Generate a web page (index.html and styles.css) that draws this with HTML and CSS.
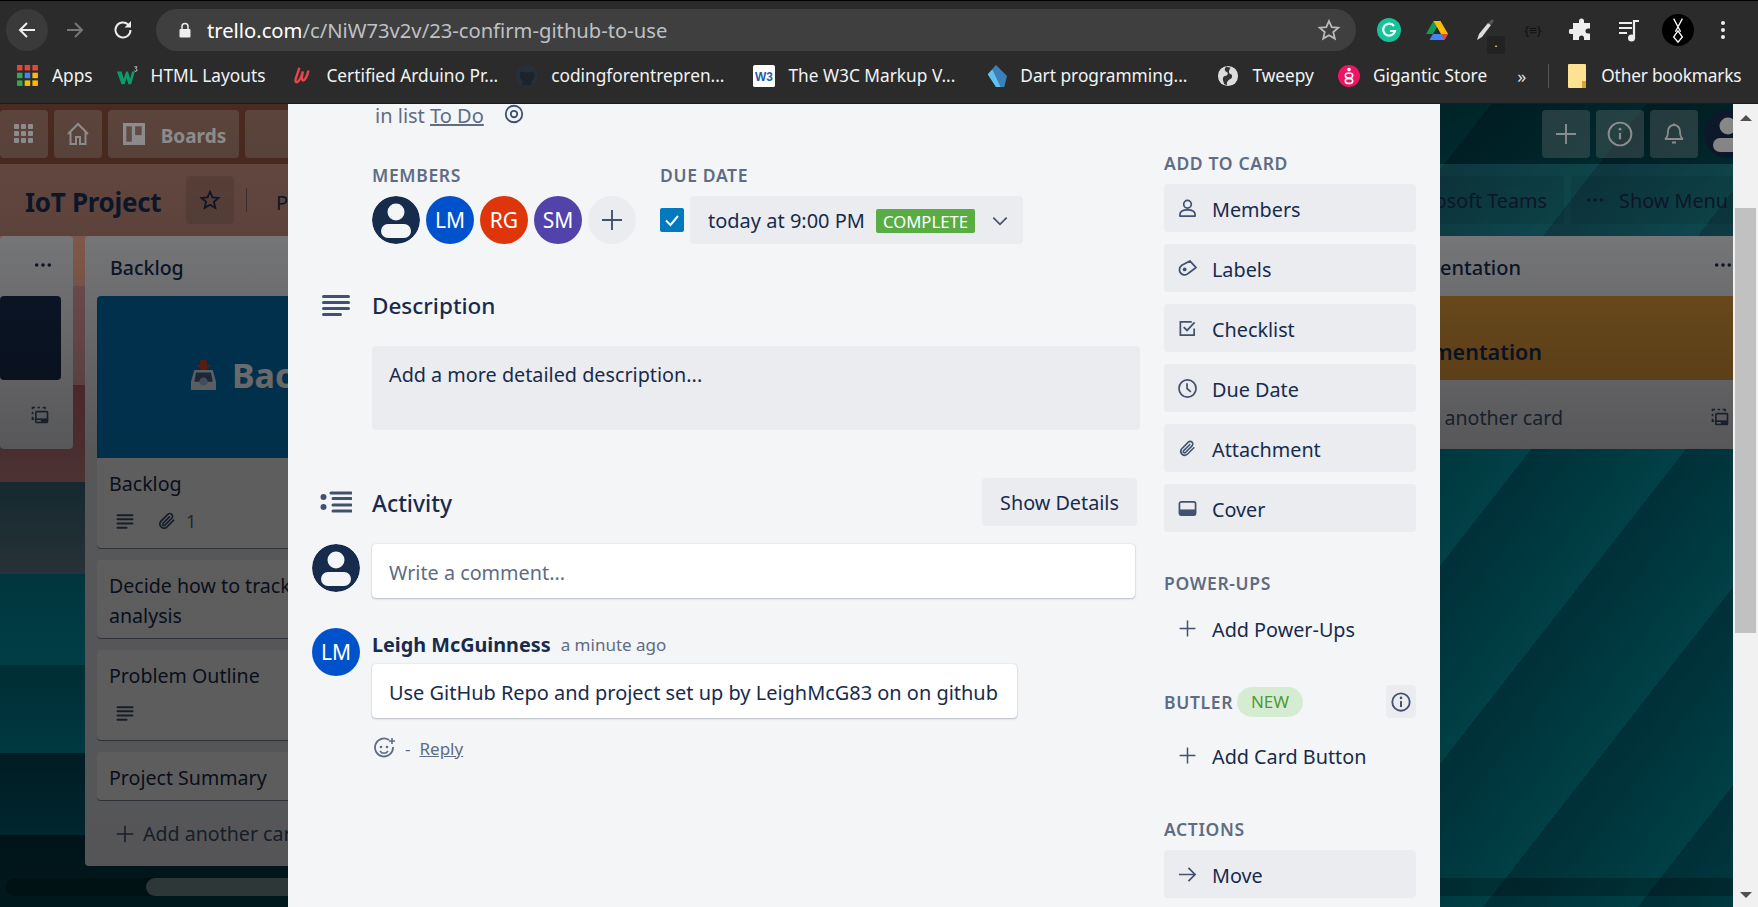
FILE: index.html
```html
<!DOCTYPE html>
<html lang="en">
<head>
<meta charset="utf-8">
<title>Confirm GitHub to use | Trello</title>
<link rel="stylesheet" href="styles.css">
</head>
<body>
<svg class="defs" width="0" height="0" aria-hidden="true">
  <symbol id="i-desc" viewBox="0 0 24 24"><path d="M3 5h18M3 10h18M3 15h18M3 20h11" fill="none" stroke="currentColor" stroke-width="2.4" stroke-linecap="round"/></symbol>
  <symbol id="i-clip" viewBox="0 0 24 24"><path d="M20 11l-8.500 8.500a5 5 0 0 1-7-7L13 4a3.300 3.300 0 0 1 4.700 4.700L9.500 17a1.600 1.600 0 0 1-2.300-2.300L15 7" fill="none" stroke="currentColor" stroke-width="2" stroke-linecap="round"/></symbol>
  <symbol id="i-plus" viewBox="0 0 24 24"><path d="M12 2v20M2 12h20" fill="none" stroke="currentColor" stroke-width="1.900"/></symbol>
  <symbol id="i-template" viewBox="0 0 24 24"><path d="M3 5V3h3M9 3h3M15 3h3v2M3 8v3M3 14v3h2" fill="none" stroke="currentColor" stroke-width="2"/><rect x="6" y="7" width="16" height="15" rx="2" fill="currentColor"/><rect x="8" y="9" width="12" height="7" fill="#ebecf0"/><rect x="8" y="18" width="5" height="2" fill="#ebecf0"/></symbol>
  <symbol id="i-avatar" viewBox="0 0 48 48"><circle cx="24" cy="24" r="24" fill="#172b4d"/><circle cx="24" cy="16" r="8.500" fill="#f4f5f7"/><rect x="9" y="28" width="30" height="14" rx="7" fill="#f4f5f7"/></symbol>
</svg>

<header class="chrome">
  <div class="toolbar">
    <span class="nav-btn nav-btn-hover"><svg viewBox="0 0 24 24" class="ic24"><path d="M20 12H5M12 5l-7 7 7 7" fill="none" stroke="#eee" stroke-width="2"/></svg></span>
    <span class="nav-btn"><svg viewBox="0 0 24 24" class="ic24"><path d="M4 12h15M12 5l7 7-7 7" fill="none" stroke="#777" stroke-width="2"/></svg></span>
    <span class="nav-btn"><svg viewBox="0 0 24 24" class="ic24"><path d="M19.500 12a7.500 7.500 0 1 1-2.300-5.400" fill="none" stroke="#eee" stroke-width="2"/><path d="M20 3v6.500h-6.500z" fill="#eee"/></svg></span>
    <div class="omnibox">
      <svg viewBox="0 0 16 16" class="lock"><rect x="2.500" y="7" width="11" height="8.500" rx="1" fill="#eee"/><path d="M5 7V4.500a3 3 0 0 1 6 0V7" fill="none" stroke="#eee" stroke-width="1.500"/></svg>
      <span class="url"><b>trello.com</b>/c/NiW73v2v/23-confirm-github-to-use</span>
      <svg viewBox="0 0 24 24" class="star"><path d="M12 3l2.700 6.100 6.600.6-5 4.400 1.500 6.500L12 17.200l-5.800 3.400 1.500-6.500-5-4.400 6.600-.6z" fill="none" stroke="#bbb" stroke-width="1.800"/></svg>
    </div>
    <div class="exts">
      <span class="ext"><svg viewBox="0 0 24 24" class="ic24"><circle cx="12" cy="12" r="12" fill="#15c39a"/><path d="M17 8a6 6 0 1 0 1 5h-5" fill="none" stroke="#fff" stroke-width="2.200"/></svg></span>
      <span class="ext"><svg viewBox="0 0 24 24" class="ic24"><path d="M8.500 3h7L8 16H1z" fill="#0f9d58"/><path d="M15.500 3L23 16h-7L8.500 3z" fill="#fbbc04"/><path d="M23 16l-3.500 6H4.500L8 16z" fill="#4285f4"/><path d="M23 16l-3.500 6-3.500-6z" fill="#ea4335"/></svg></span>
      <span class="ext"><svg viewBox="0 0 24 24" class="ic24"><path d="M4 22l2-6 9-11 3 2-9 12z" fill="#ddd"/><path d="M15 5l4-4 2 2-3 4z" fill="#555"/></svg><i class="ext-badge">.</i></span>
      <span class="ext ext-json">{≡}</span>
      <span class="ext"><svg viewBox="0 0 24 24" class="ic24"><path d="M10 3a2.500 2.500 0 0 1 5 0v2h6v5.500h-2a2.500 2.500 0 0 0 0 5h2V22h-6v-2a2.500 2.500 0 0 0-5 0v2H4v-6H2a2.500 2.500 0 0 1 0-5h2V5h6z" fill="#eee"/></svg></span>
      <span class="ext"><svg viewBox="0 0 24 24" class="ic24"><path d="M2 5h13M2 10h13M2 15h8" stroke="#eee" stroke-width="2.200" fill="none"/><path d="M17 21V3h5" stroke="#eee" stroke-width="2.200" fill="none"/><circle cx="14.500" cy="20" r="3.500" fill="#eee"/></svg></span>
      <span class="profile"><svg viewBox="0 0 32 32"><path d="M11 3l8 15M21 3l-8 15M16 17l-5 7 5 6 5-6z" fill="none" stroke="#fff" stroke-width="1.500"/></svg></span>
      <span class="ext"><svg viewBox="0 0 24 24" class="ic24"><circle cx="12" cy="5" r="2" fill="#eee"/><circle cx="12" cy="12" r="2" fill="#eee"/><circle cx="12" cy="19" r="2" fill="#eee"/></svg></span>
    </div>
  </div>
  <nav class="bookmarks">
    <span class="bm bm-apps"><svg viewBox="0 0 20 20" class="fav"><g><rect x="0" y="0" width="5" height="5" fill="#ea4335"/><rect x="7" y="0" width="5" height="5" fill="#ea4335"/><rect x="14" y="0" width="5" height="5" fill="#ea4335"/><rect x="0" y="7" width="5" height="5" fill="#34a853"/><rect x="7" y="7" width="5" height="5" fill="#4285f4"/><rect x="14" y="7" width="5" height="5" fill="#fbbc04"/><rect x="0" y="14" width="5" height="5" fill="#34a853"/><rect x="7" y="14" width="5" height="5" fill="#fbbc04"/><rect x="14" y="14" width="5" height="5" fill="#fbbc04"/></g></svg>Apps</span>
    <span class="bm bm-html"><svg viewBox="0 0 24 24" class="fav"><path d="M1 7h5l2.500 8 2.500-8h2l2.500 8 2-8h3l-4 14h-3l-2-7-2 7H6z" fill="#0a9d6a"/><path d="M20 2h3l-1.500 2a1.500 1.500 0 1 1-1.500 2" fill="none" stroke="#ccc" stroke-width="1"/></svg>HTML Layouts</span>
    <span class="bm bm-cert"><svg viewBox="0 0 24 24" class="fav"><path d="M9 3c-1 6-5 12-4 15 1 2 4 0 6-5l2-6c-1 5-2 9 0 10 2 0 5-5 6-11" fill="none" stroke="#e5474b" stroke-width="2.600"/></svg>Certified Arduino Pr...</span>
    <span class="bm bm-code"><svg viewBox="0 0 24 24" class="fav"><circle cx="12" cy="12" r="12" fill="#26303a"/><path d="M7 22v-5c-2-1-3-3-3-6l1-4 3 1h8l3-1 1 4c0 3-1 5-3 6v5z" fill="#1c232b"/></svg>codingforentrepren...</span>
    <span class="bm bm-w3"><svg viewBox="0 0 24 24" class="fav"><rect width="24" height="24" rx="2" fill="#fff"/><text x="12" y="17" text-anchor="middle" class="w3">W3</text></svg>The W3C Markup V...</span>
    <span class="bm bm-dart"><svg viewBox="0 0 24 24" class="fav"><path d="M12 0L3 10l9 14h9l3-12z" fill="#3d7fb8"/><path d="M3 10l5-5 9 19h-5z" fill="#5fc3ee"/></svg>Dart programming...</span>
    <span class="bm bm-tweepy"><svg viewBox="0 0 24 24" class="fav"><circle cx="12" cy="12" r="11" fill="#ddd"/><path d="M10 2c-3 3-1 5 1 6s0 4-2 4-4 2-1 9l3 1c-1-4 2-6 4-7s2-5 0-5-3-4 0-7z" fill="#333"/></svg>Tweepy</span>
    <span class="bm bm-giant"><svg viewBox="0 0 24 24" class="fav"><circle cx="12" cy="12" r="12" fill="#ee1465"/><rect x="8" y="9" width="8" height="5" rx="2.500" fill="none" stroke="#fff" stroke-width="1.800"/><rect x="8" y="15" width="8" height="5" rx="2.500" fill="none" stroke="#fff" stroke-width="1.800"/><circle cx="12" cy="5" r="2" fill="#fff"/></svg>Gigantic Store</span>
    <span class="bm-more">»</span>
    <span class="bm-sep"></span>
    <span class="bm bm-other"><svg viewBox="0 0 18 24" class="fav-folder"><rect width="18" height="24" rx="1" fill="#fde293"/><path d="M14 24v-7h4v7z" fill="#d3a82b"/></svg>Other bookmarks</span>
  </nav>
</header>

<main class="viewport">
  <div class="board">
    <div class="board-nav">
      <div class="nav-group">
        <span class="bbtn bbtn-square bbtn-apps"><svg viewBox="0 0 20 20" class="ic20"><g fill="#fff"><rect x="0" y="0" width="5" height="5" rx="1"/><rect x="7" y="0" width="5" height="5" rx="1"/><rect x="14" y="0" width="5" height="5" rx="1"/><rect x="0" y="7" width="5" height="5" rx="1"/><rect x="7" y="7" width="5" height="5" rx="1"/><rect x="14" y="7" width="5" height="5" rx="1"/><rect x="0" y="14" width="5" height="5" rx="1"/><rect x="7" y="14" width="5" height="5" rx="1"/><rect x="14" y="14" width="5" height="5" rx="1"/></g></svg></span>
        <span class="bbtn bbtn-square"><svg viewBox="0 0 24 24" class="ic24"><path d="M2 12L12 2l10 10M4.500 10v12H10v-7h4v7h5.500V10" fill="none" stroke="#fff" stroke-width="2"/></svg></span>
        <span class="bbtn bbtn-boards"><svg viewBox="2 2 20 20" class="ic22"><path d="M2 2h20v20H2z" fill="#fff"/><rect x="5" y="5" width="5" height="14" fill="#b08a80"/><rect x="13" y="5" width="6" height="8" fill="#b08a80"/></svg><span>Boards</span></span>
        <span class="bbtn bbtn-search"></span>
      </div>
      <div class="nav-group">
        <span class="bbtn bbtn-square"><svg viewBox="0 0 24 24" class="ic24"><use href="#i-plus" color="#fff"/></svg></span>
        <span class="bbtn bbtn-square"><svg viewBox="0 0 24 24" class="ic26"><circle cx="12" cy="12" r="10.500" fill="none" stroke="#fff" stroke-width="1.800"/><path d="M12 11v6" stroke="#fff" stroke-width="2"/><circle cx="12" cy="7.500" r="1.300" fill="#fff"/></svg></span>
        <span class="bbtn bbtn-square"><svg viewBox="0 0 24 24" class="ic24"><path d="M12 3a6 6 0 0 1 6 6c0 5 1 7 3 8H3c2-1 3-3 3-8a6 6 0 0 1 6-6zM10 20.500h4M11 2.500h2" fill="none" stroke="#fff" stroke-width="1.800"/></svg></span>
        <svg viewBox="0 0 48 48" class="nav-avatar"><use href="#i-avatar"/></svg>
      </div>
    </div>
    <div class="board-bar">
      <div class="bar-left">
        <h1 class="board-name">IoT Project</h1>
        <span class="bar-star"><svg viewBox="0 0 24 24" class="ic22"><path d="M12 3l2.700 6.100 6.600.6-5 4.400 1.500 6.500L12 17.200l-5.800 3.400 1.500-6.500-5-4.400 6.600-.6z" fill="none" stroke="#172b4d" stroke-width="2"/></svg></span>
        <span class="bar-sep"></span>
        <span class="bar-p">P</span>
      </div>
      <div class="bar-right">
        <span class="bar-btn bar-teams">Microsoft Teams</span>
        <span class="bar-btn bar-menu"><svg viewBox="0 0 20 6" class="dots"><circle cx="3" cy="3" r="2"/><circle cx="10" cy="3" r="2"/><circle cx="17" cy="3" r="2"/></svg><span>Show Menu</span></span>
      </div>
    </div>
    <div class="lists">
      <section class="list list-a">
        <div class="list-dots"><svg viewBox="0 0 20 6" class="dots"><circle cx="3" cy="3" r="2"/><circle cx="10" cy="3" r="2"/><circle cx="17" cy="3" r="2"/></svg></div>
        <div class="cover-dark"></div>
        <div class="list-foot"><svg viewBox="0 0 24 24" class="ic20"><use href="#i-template"/></svg></div>
      </section>
      <section class="list list-b">
        <h2 class="list-title">Backlog</h2>
        <article class="card">
          <div class="cover-blue">
            <svg viewBox="0 0 30 36" class="tray"><path d="M11 0h8v6h5l-9 8-9-8h5z" fill="#d8402a"/><path d="M4 12h22l4 14v10H0V26z" fill="#dfe6ee"/><path d="M6 15h18l2 11H4z" fill="#41617f"/><circle cx="15" cy="26" r="5" fill="#9cc0de"/></svg>
            <span>Backlog</span>
          </div>
          <div class="card-title card-title-b">Backlog</div>
          <div class="card-badges">
            <svg viewBox="0 0 24 24" class="ic20"><use href="#i-desc"/></svg>
            <svg viewBox="0 0 24 24" class="ic20"><use href="#i-clip"/></svg>
            <span class="badge-num">1</span>
          </div>
        </article>
        <article class="card"><div class="card-title">Decide how to track<br>analysis</div></article>
        <article class="card">
          <div class="card-title card-title-b">Problem Outline</div>
          <div class="card-badges"><svg viewBox="0 0 24 24" class="ic20"><use href="#i-desc"/></svg></div>
        </article>
        <article class="card"><div class="card-title">Project Summary</div></article>
        <div class="add-card"><svg viewBox="0 0 24 24" class="ic20"><use href="#i-plus"/></svg>Add another card</div>
      </section>
      <section class="list list-c">
        <h2 class="list-title-c"><span>Documentation</span></h2>
        <div class="list-dots-c"><svg viewBox="0 0 20 6" class="dots"><circle cx="3" cy="3" r="2"/><circle cx="10" cy="3" r="2"/><circle cx="17" cy="3" r="2"/></svg></div>
        <div class="cover-orange"><span class="cover-text"><span>Documentation</span></span></div>
        <div class="foot-c"><span class="foot-text"><span>Add another card</span></span><svg viewBox="0 0 24 24" class="ic20"><use href="#i-template"/></svg></div>
      </section>
    </div>
    <div class="hscroll"><span class="hscroll-thumb"></span></div>
  </div>
  <div class="overlay"></div>

  <div class="overlay-scroll">
    <div class="modal">
      <div class="modal-main">
        <div class="in-list"><span>in list <u>To Do</u></span>
          <svg viewBox="0 0 24 24" class="ic22"><circle cx="12" cy="12" r="9" fill="none" stroke="#42526e" stroke-width="2"/><circle cx="12" cy="12" r="3.500" fill="none" stroke="#42526e" stroke-width="2"/></svg>
        </div>
        <div class="meta">
          <div class="meta-col">
            <h3 class="label">MEMBERS</h3>
            <div class="avatars">
              <svg viewBox="0 0 48 48" class="avatar"><use href="#i-avatar"/></svg>
              <span class="avatar avatar-lm">LM</span>
              <span class="avatar avatar-rg">RG</span>
              <span class="avatar avatar-sm">SM</span>
              <span class="avatar avatar-add"><svg viewBox="0 0 24 24" class="ic24"><use href="#i-plus"/></svg></span>
            </div>
          </div>
          <div class="meta-col">
            <h3 class="label">DUE DATE</h3>
            <div class="due">
              <span class="check"><svg viewBox="0 0 24 24" class="ic24"><path d="M6 12.500l4.500 4.500L18 8" fill="none" stroke="#fff" stroke-width="2"/></svg></span>
              <span class="due-btn">today at 9:00 PM<span class="complete">COMPLETE</span>
                <svg viewBox="0 0 24 24" class="ic20 chev"><path d="M4 8l8 8 8-8" fill="none" stroke="#42526e" stroke-width="2"/></svg>
              </span>
            </div>
          </div>
        </div>
        <div class="section-head head-desc">
          <svg viewBox="0 0 28 22" class="sec-icon"><path d="M1.500 2.500h25M1.500 8.500h25M1.500 14.500h25M1.500 20.500h17" fill="none" stroke="#42526e" stroke-width="3" stroke-linecap="round"/></svg>
          <h3 class="section-title">Description</h3>
        </div>
        <div class="desc-box">Add a more detailed description...</div>
        <div class="section-head head-activity">
          <svg viewBox="0 0 32 22" class="sec-icon sec-icon-a"><circle cx="3.500" cy="6" r="3" fill="#42526e"/><circle cx="3.500" cy="16" r="3" fill="#42526e"/><path d="M11 2h20M13 7.500h18M13 14h18M13 20h18" fill="none" stroke="#42526e" stroke-width="3" stroke-linecap="round"/></svg>
          <h3 class="section-title section-title-a">Activity</h3>
          <span class="show-details">Show Details</span>
        </div>
        <div class="comment-row">
          <svg viewBox="0 0 48 48" class="avatar comment-avatar"><use href="#i-avatar"/></svg>
          <div class="comment-input">Write a comment...</div>
        </div>
        <div class="action">
          <span class="avatar avatar-lm comment-avatar">LM</span>
          <div class="action-body">
            <div class="action-head"><b>Leigh McGuinness</b><span>a minute ago</span></div>
            <div class="bubble">Use GitHub Repo and project set up by LeighMcG83 on on github</div>
            <div class="reactions">
              <svg viewBox="0 0 22 22" class="smile"><path d="M15 3a9 9 0 1 0 4 7" fill="none" stroke="#5e6c84" stroke-width="1.800"/><circle cx="7" cy="10" r="1.300" fill="#5e6c84"/><circle cx="13" cy="10" r="1.300" fill="#5e6c84"/><path d="M6 14c2 3 6 3 8 0" fill="none" stroke="#5e6c84" stroke-width="1.600"/><path d="M18 1v6M15 4h6" stroke="#5e6c84" stroke-width="1.600"/></svg>
              <span>-</span><u>Reply</u>
            </div>
          </div>
        </div>
      </div>
      <aside class="sidebar">
        <h3 class="label side-label">ADD TO CARD</h3>
        <div class="side-btn"><svg viewBox="0 0 20 20" class="side-ic"><circle cx="10" cy="5.500" r="4" fill="none" stroke="#42526e" stroke-width="1.800"/><path d="M2 18v-1.500c0-3 3-5 8-5s8 2 8 5V18z" fill="none" stroke="#42526e" stroke-width="1.800" stroke-linejoin="round"/></svg>Members</div>
        <div class="side-btn"><svg viewBox="0 0 20 20" class="side-ic"><path d="M1.500 11.500a5.500 5.500 0 0 0 9.500 3.500l8-6L12.500 2 4 6.500c-1.500 1-2.500 3-2.500 5z" fill="none" stroke="#42526e" stroke-width="1.800" stroke-linejoin="round"/><circle cx="7" cy="11" r="2" fill="#42526e"/></svg>Labels</div>
        <div class="side-btn"><svg viewBox="0 0 20 20" class="side-ic"><path d="M17 10v7H2.500V3h12" fill="none" stroke="#42526e" stroke-width="1.800"/><path d="M6 8.500l3.500 3.500 8-8.500" fill="none" stroke="#42526e" stroke-width="1.800"/></svg>Checklist</div>
        <div class="side-btn"><svg viewBox="0 0 20 20" class="side-ic"><circle cx="10" cy="10" r="9" fill="none" stroke="#42526e" stroke-width="1.800"/><path d="M9.500 4.500V10l4 3.500" fill="none" stroke="#42526e" stroke-width="1.800"/></svg>Due Date</div>
        <div class="side-btn"><svg viewBox="0 0 24 24" class="side-ic"><use href="#i-clip" color="#42526e"/></svg>Attachment</div>
        <div class="side-btn"><svg viewBox="0 0 20 20" class="side-ic"><rect x="1.500" y="3" width="17" height="14" rx="2" fill="none" stroke="#42526e" stroke-width="1.800"/><rect x="1.500" y="11" width="17" height="6" fill="#42526e"/></svg>Cover</div>
        <h3 class="label side-label side-gap">POWER-UPS</h3>
        <div class="side-link"><svg viewBox="0 0 24 24" class="side-ic"><use href="#i-plus" color="#42526e"/></svg>Add Power-Ups</div>
        <div class="butler-head">
          <h3 class="label">BUTLER</h3>
          <span class="new-pill">NEW</span>
          <span class="info-btn"><svg viewBox="0 0 24 24" class="ic22"><circle cx="12" cy="12" r="9.500" fill="none" stroke="#42526e" stroke-width="2"/><path d="M12 11v6.500" stroke="#42526e" stroke-width="2.200"/><circle cx="12" cy="7.500" r="1.400" fill="#42526e"/></svg></span>
        </div>
        <div class="side-link side-link-b"><svg viewBox="0 0 24 24" class="side-ic"><use href="#i-plus" color="#42526e"/></svg>Add Card Button</div>
        <h3 class="label side-label side-gap-b">ACTIONS</h3>
        <div class="side-btn"><svg viewBox="0 0 20 20" class="side-ic"><path d="M1 10h17M11 3l7 7-7 7" fill="none" stroke="#42526e" stroke-width="1.800"/></svg>Move</div>
      </aside>
    </div>
    <div class="vscroll">
      <span class="arrow arrow-up"></span>
      <span class="thumb"></span>
      <span class="arrow arrow-down"></span>
    </div>
  </div>
</main>
</body>
</html>
```
FILE: styles.css
```css
* { box-sizing: border-box; }
html, body { margin: 0; height: 100%; }
body {
  display: flex;
  flex-direction: column;
  height: 907px;
  overflow: hidden;
  font-family: "Noto Sans", "Open Sans", sans-serif;
  color: #172b4d;
  background: #000;
}
h1, h2, h3 { margin: 0; font-weight: 400; }
svg { display: block; flex: none; }
.defs { position: absolute; }
.ic20 { width: 20px; height: 20px; }
.ic22 { width: 22px; height: 22px; }
.ic24 { width: 24px; height: 24px; }
.ic26 { width: 26px; height: 26px; }

/* browser chrome */
.chrome { flex: none; height: 104px; background: #2b2b2b; border-bottom: 1px solid #1a1a1a; color: #f1f3f4; }
.toolbar { display: flex; align-items: center; height: 54px; padding: 5px 8px 0 6px; border-top: 1px solid #000; }
.nav-btn { display: flex; align-items: center; justify-content: center; width: 42px; height: 42px; border-radius: 50%; margin-right: 6px; flex: none; }
.nav-btn-hover { background: #3a3a3a; }
.omnibox { display: flex; align-items: center; width: 1200px; height: 42px; margin-left: 6px; padding: 0 15px 0 21px; background: #3f3f3f; border-radius: 21px; flex: none; }
.lock { width: 16px; height: 18px; margin-right: 14px; }
.url { flex: 1; font-size: 20.200px; color: #bdc1c6; white-space: nowrap; }
.url b { font-weight: 400; color: #fff; }
.star { width: 24px; height: 24px; }
.exts { display: flex; align-items: center; margin-left: 21px; }
.ext { position: relative; display: flex; align-items: center; justify-content: center; width: 24px; height: 24px; margin-right: 24px; }
.ext-json { font-size: 13px; color: #111; margin-right: 24px; }
.ext-badge { position: absolute; right: -8px; bottom: -12px; width: 18px; height: 18px; background: #222; border-radius: 2px; font-size: 11px; color: #fff; text-align: center; font-style: normal; line-height: 14px; }
.profile { display: flex; align-items: center; justify-content: center; width: 32px; height: 32px; margin: 0 17px 0 -3px; background: #000; border-radius: 50%; }
.profile svg { width: 28px; height: 28px; }
.bookmarks { display: flex; align-items: center; height: 43px; padding-left: 17px; font-size: 17.300px; white-space: nowrap; }
.bm { display: flex; align-items: center; gap: 13px; }
.fav { width: 22px; height: 22px; }
.fav-folder { width: 18px; height: 24px; }
.w3 { font: 700 13px "Liberation Sans", sans-serif; fill: #1a5ea8; }
.bm-apps { margin-right: -1px; }
.bm-html { margin-left: 24px; }
.bm-cert { margin-left: 26px; }
.bm-code { margin-left: 18px; }
.bm-w3 { margin-left: 29px; }
.bm-dart { margin-left: 30px; }
.bm-tweepy { margin-left: 30px; }
.bm-giant { margin-left: 24px; }
.bm-more { margin-left: 30px; font-size: 18px; color: #ddd; }
.bm-sep { width: 1px; height: 24px; background: #555; margin: 0 19px 0 22px; }
.bm-other { gap: 15px; letter-spacing: -.2px; }

/* board under the modal */
.viewport { position: relative; flex: 1; overflow: hidden; }
.board {
  height: 100%;
  display: flex;
  flex-direction: column;
  background-color: #009ab0;
  background-image:
    linear-gradient(180deg,
      #c57055 0, #c57055 60px,
      #b07868 60px, #b07868 132px,
      #feb196 132px, #feb196 182px,
      #dd9da2 182px, #dd9da2 281px,
      #b5606c 281px, #d08b8b 378px,
      #386e80 378px, #6c8896 470px,
      #0090a8 470px, #00aac0 561px,
      #007c90 561px, #009cb4 649px,
      #004f60 649px, #006a80 731px,
      #003843 731px, #00434e 803px),
    linear-gradient(180deg, rgba(0, 0, 0, .42) 0, rgba(0, 0, 0, .26) 132px, rgba(0, 0, 0, 0) 346px),
    repeating-linear-gradient(128deg,
      #0092a6 0, #00b0c0 77px,
      #00829a 77px, #0092a6 122px);
  background-size: 288px 100%, 100% 100%, 100% 100%;
  background-repeat: no-repeat;
}
.board-nav { flex: none; display: flex; justify-content: space-between; height: 60px; padding: 6px 0; background: rgba(0, 0, 0, .32); }
.nav-group { display: flex; gap: 6px; }
.bbtn { display: flex; align-items: center; justify-content: center; height: 48px; background: rgba(255, 255, 255, .26); border-radius: 4px; color: #fff; }
.bbtn-square { width: 48px; }
.bbtn-boards { width: 131px; gap: 16px; padding: 0 0 0 2px; font-weight: 700; font-size: 19px; }
.bbtn-boards span { padding-top: 3px; }
.bbtn-search { width: 300px; }
.nav-avatar { width: 48px; height: 48px; margin-right: 6px; }
.board-bar { flex: none; display: flex; justify-content: space-between; height: 72px; padding: 12px 0; background: rgba(255, 255, 255, .1); }
.bar-left, .bar-right { display: flex; align-items: center; }
.board-name { font-size: 26px; font-weight: 700; margin-left: 25px; padding-top: 4px; width: 161px; letter-spacing: -.3px; }
.bar-star { display: flex; align-items: center; justify-content: center; width: 48px; height: 48px; border-radius: 4px; background: rgba(0, 0, 0, .1); }
.bar-sep { width: 1px; height: 24px; margin: 0 29px 0 12px; background: rgba(23, 43, 77, .5); }
.bar-p { font-size: 20px; padding-top: 4px; }
.bar-right { gap: 7px; padding-right: 18px; }
.bar-btn { display: flex; align-items: center; height: 48px; background: rgba(0, 0, 0, .08); border-radius: 4px; font-size: 19.800px; white-space: nowrap; }
.bar-teams { padding: 0 17px 0 12px; }
.bar-menu { gap: 15px; padding: 0 12px 0 15px; }
.dots { width: 18px; height: 6px; fill: #172b4d; }
.lists { flex: 1; display: flex; align-items: flex-start; gap: 12px; min-height: 0; position: relative; }
.list { background: #ebecf0; border-radius: 4px; }
.list-a { flex: none; width: 73px; height: 213px; }
.list-dots { display: flex; justify-content: flex-end; height: 60px; padding: 26px 21px 0 0; }
.cover-dark { height: 84px; margin-right: 12px; background: #172b4d; border-radius: 4px; }
.list-foot { display: flex; justify-content: flex-end; padding: 25px 23px 0 0; color: #42526e; }
.list-b { flex: none; width: 402px; height: 630px; padding: 0 12px; }
.list-title { height: 60px; line-height: 64px; padding-left: 13px; font-size: 19.500px; font-weight: 500; }
.card { background: #fff; border-radius: 4px; box-shadow: 0 1px 0 rgba(9, 30, 66, .5); margin-bottom: 12px; overflow: hidden; }
.card-title { padding: 11px 12px 7px; font-size: 19.600px; line-height: 30px; color: #172b4d; }
.card-title-b { padding-bottom: 4px; }
.cover-blue { display: flex; align-items: center; gap: 16px; height: 162px; padding: 0 0 4px 94px; background: linear-gradient(180deg, #0068a3, #0082cb); font-size: 34px; font-weight: 700; color: #fff; }
.tray { width: 25px; height: 30px; }
.card-badges { display: flex; align-items: center; gap: 22px; height: 45px; padding: 0 18px 9px; color: #42526e; }
.badge-num { font-size: 18px; margin-left: -13px; color: #5e6c84; }
.add-card { display: flex; align-items: center; gap: 8px; padding: 8px 18px; font-size: 19.600px; color: #42526e; }
.list-c { position: absolute; left: 1440px; right: 0; top: 0; height: 213px; border-radius: 0; overflow: hidden; }
.list-title-c { display: flex; justify-content: flex-end; width: 81px; height: 60px; line-height: 64px; overflow: hidden; white-space: nowrap; font-size: 20px; font-weight: 500; }
.list-dots-c { position: absolute; top: 26px; left: 274px; }
.cover-orange { height: 84px; padding-top: 42px; background: #e09a3a; }
.cover-text { display: flex; justify-content: flex-end; width: 102px; overflow: hidden; line-height: 28px; font-size: 21.500px; font-weight: 600; white-space: nowrap; }
.foot-c { display: flex; align-items: center; justify-content: space-between; height: 30px; margin-top: 22px; padding-right: 28px; color: #42526e; }
.foot-text { display: flex; justify-content: flex-end; width: 123px; overflow: hidden; font-size: 19.600px; white-space: nowrap; }
.hscroll { position: absolute; left: 6px; right: 0; top: 774px; height: 18px; border-radius: 9px; background: rgba(0, 0, 0, .25); }
.hscroll-thumb { display: block; margin-left: 140px; width: 1200px; height: 100%; border-radius: 9px; background: rgba(255, 255, 255, .5); }
.overlay { position: absolute; inset: 0; background: linear-gradient(180deg, rgba(0, 0, 0, .44) 0, rgba(0, 0, 0, .5) 132px, rgba(0, 0, 0, .63) 346px, rgba(0, 0, 0, .64) 100%); }

/* modal */
.overlay-scroll { position: absolute; inset: 0; overflow: hidden; }
.modal {
  position: absolute;
  left: 288px;
  top: 0;
  bottom: 0;
  width: 1152px;
  display: flex;
  gap: 24px;
  padding: 0 24px;
  background: #f4f5f7;
  overflow: hidden;
}
.modal-main { flex: none; width: 828px; }
.in-list { display: flex; align-items: center; gap: 19px; height: 24px; padding: 0 0 2px 63px; font-size: 20px; color: #5e6c84; }
.in-list u { color: #5e6c84; }
.in-list svg { margin-top: -2px; }
.meta { display: flex; gap: 24px; margin: 35px 0 0 60px; }
.label { font-size: 17.500px; line-height: 24px; font-weight: 600; letter-spacing: .65px; color: #5e6c84; white-space: nowrap; }
.avatars { display: flex; gap: 6px; margin-top: 9px; }
.avatar { display: flex; align-items: center; justify-content: center; width: 48px; height: 48px; border-radius: 50%; color: #fff; font-size: 21px; flex: none; }
.avatar-lm { background: #0052cc; }
.avatar-rg { background: #de350b; }
.avatar-sm { background: #5243aa; }
.avatar-add { background: #ebecf0; color: #42526e; }
.due { display: flex; align-items: center; gap: 6px; margin-top: 9px; }
.check { display: flex; align-items: center; justify-content: center; width: 24px; height: 24px; border-radius: 2px; background: #0079bf; }
.due-btn { display: flex; align-items: center; width: 333px; height: 48px; padding: 1px 0 0 18px; border-radius: 4px; background: #ebecf0; font-size: 20px; white-space: nowrap; color: #172b4d; }
.complete { margin-left: 11px; padding: 0 6px; width: 99px; height: 24px; border-radius: 2px; background: #5aac44; color: #fff; font-size: 16.700px; line-height: 26px; text-align: center; }
.chev { margin-left: 15px; }
.section-head { position: relative; display: flex; align-items: center; height: 48px; }
.sec-icon { width: 28px; height: 22px; margin-left: 10px; margin-right: 22px; }
.sec-icon-a { width: 32px; margin-left: 8px; margin-right: 20px; }
.section-title { font-size: 22.500px; font-weight: 500; }
.section-title-a { font-size: 22.800px; padding-top: 2px; }
.head-desc { margin-top: 37px; }
.desc-box { height: 84px; margin: 17px 0 0 60px; padding: 14px 17px; border-radius: 4px; background: #ebecf0; font-size: 19.800px; line-height: 30px; color: #172b4d; }
.head-activity { margin-top: 48px; }
.show-details { position: absolute; left: 670px; display: flex; align-items: center; justify-content: center; width: 155px; height: 48px; border-radius: 4px; background: #ebecf0; font-size: 19.800px; }
.comment-row { display: flex; gap: 12px; margin-top: 18px; }
.comment-input { width: 763px; height: 54px; padding: 0 17px; line-height: 57px; background: #fff; border-radius: 4px; box-shadow: 0 1px 2px rgba(9, 30, 66, .25), 0 0 1px rgba(9, 30, 66, .25); font-size: 19.800px; color: #5e6c84; }
.action { display: flex; gap: 12px; margin-top: 30px; }
.action-head { display: flex; align-items: center; gap: 10px; height: 36px; padding-bottom: 3px; font-size: 19.800px; }
.action-head span { font-size: 17px; color: #5e6c84; }
.bubble { width: 645px; height: 54px; padding: 0 17px; line-height: 57px; background: #fff; border-radius: 4px; box-shadow: 0 1px 2px rgba(9, 30, 66, .25), 0 0 1px rgba(9, 30, 66, .25); font-size: 19.950px; white-space: nowrap; }
.reactions { display: flex; align-items: center; gap: 9px; height: 30px; margin-top: 15px; padding-left: 2px; font-size: 17px; color: #5e6c84; }
.smile { width: 22px; height: 22px; }

/* sidebar */
.sidebar { flex: none; width: 252px; display: flex; flex-direction: column; }
.side-label { flex: none; margin-top: 47px; height: 24px; margin-bottom: 9px; }
.side-btn { flex: none; display: flex; align-items: center; gap: 15px; height: 48px; margin-bottom: 12px; padding: 2px 0 0 14px; border-radius: 4px; background: #ebecf0; font-size: 19.800px; color: #172b4d; }
.side-ic { width: 19px; height: 19px; margin-top: -2px; color: #42526e; }
.side-label.side-gap { margin-top: 27px; }
.side-link { flex: none; display: flex; align-items: center; gap: 15px; height: 48px; padding: 2px 0 0 14px; font-size: 19.800px; }
.butler-head { flex: none; display: flex; align-items: center; gap: 3px; height: 33px; margin-top: 33px; }
.new-pill { width: 66px; height: 30px; margin-left: 1px; border-radius: 15px; background: #d6ecd2; color: #519839; font-size: 17px; line-height: 30px; text-align: center; }
.info-btn { display: flex; align-items: center; justify-content: center; width: 30px; height: 33px; margin-left: auto; border-radius: 4px; background: #ebecf0; }
.side-link-b { margin-top: 13px; }
.side-label.side-gap-b { margin-top: 38px; }

/* classic scrollbar */
.vscroll { position: absolute; top: 0; right: 0; bottom: 0; width: 25px; background: #f1f1f1; }
.thumb { position: absolute; left: 2px; right: 2px; top: 104px; height: 425px; background: #c1c1c1; }
.arrow { position: absolute; left: 7px; border-left: 6px solid transparent; border-right: 6px solid transparent; }
.arrow-up { top: 11px; border-bottom: 6px solid #505050; }
.arrow-down { bottom: 9px; border-top: 6px solid #505050; }
```
